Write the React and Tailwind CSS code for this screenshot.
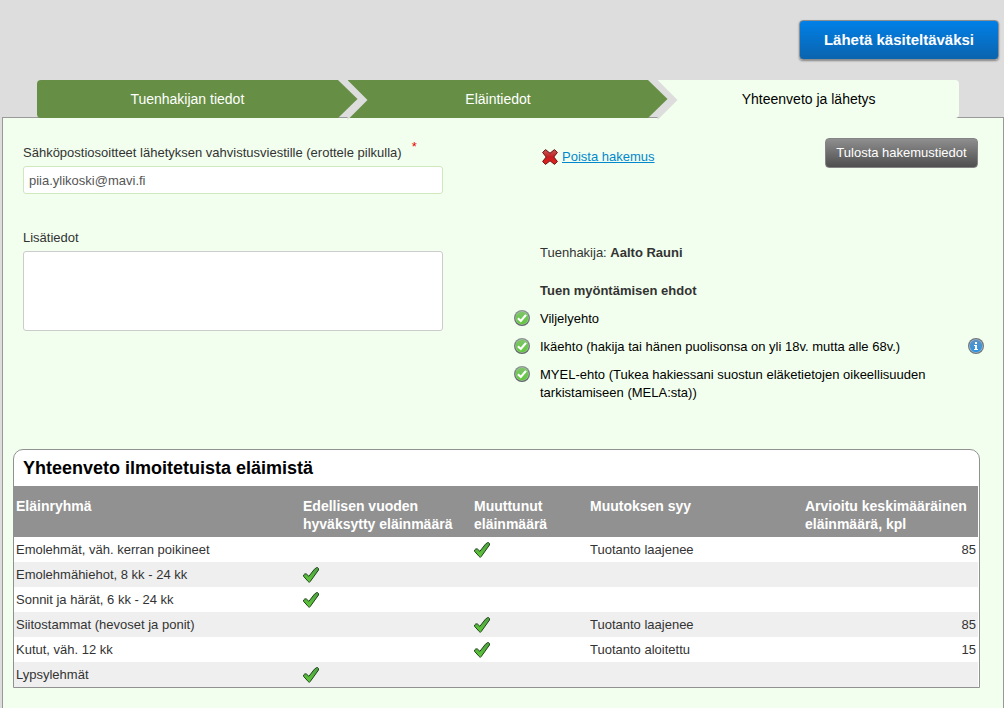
import { useState } from "react";

const steps = [
  { label: "Tuenhakijan tiedot", look: "rounded-l bg-[#668f45] text-white", arrow: true },
  { label: "Eläintiedot", look: "bg-[#668f45] text-white", arrow: true },
  { label: "Yhteenveto ja lähetys", look: "rounded-r bg-[#f2ffee] text-black", arrow: false },
];

const conditions = [
  { text: "Viljelyehto" },
  { text: "Ikäehto (hakija tai hänen puolisonsa on yli 18v. mutta alle 68v.)", info: true },
  { text: "MYEL-ehto (Tukea hakiessani suostun eläketietojen oikeellisuuden tarkistamiseen (MELA:sta))" },
];

const animals = [
  { group: "Emolehmät, väh. kerran poikineet", approved: false, changed: true, reason: "Tuotanto laajenee", amount: 85 },
  { group: "Emolehmähiehot, 8 kk - 24 kk", approved: true },
  { group: "Sonnit ja härät, 6 kk - 24 kk", approved: true },
  { group: "Siitostammat (hevoset ja ponit)", approved: false, changed: true, reason: "Tuotanto laajenee", amount: 85 },
  { group: "Kutut, väh. 12 kk", approved: false, changed: true, reason: "Tuotanto aloitettu", amount: 15 },
  { group: "Lypsylehmät", approved: true },
];

function CheckMark() {
  return (
    <svg className="block" width="16" height="16" viewBox="0 0 16 16" role="img" aria-label="Kyllä">
      <defs>
        <linearGradient id="tick" x1="0" y1="0" x2="0" y2="1">
          <stop offset="0" stopColor="#4f9e45" />
          <stop offset="1" stopColor="#5ecb35" />
        </linearGradient>
      </defs>
      <path d="M13.600 .6H14.600L15.500 1.500V3L7.300 14.400 6.300 15.400 5.300 14.600.6 9.400V8L1.800 6.900H3.300L5.900 9.300 11.400 2.200Z" fill="url(#tick)" stroke="#1f4419" strokeWidth="1" strokeLinejoin="round" />
    </svg>
  );
}

function AcceptIcon() {
  return (
    <svg className="block shrink-0" width="16" height="16" viewBox="0 0 16 16" aria-hidden="true">
      <defs>
        <linearGradient id="accept" x1="0" y1="0" x2="0" y2="1">
          <stop offset="0" stopColor="#7fc46c" />
          <stop offset="1" stopColor="#5fc93a" />
        </linearGradient>
        <linearGradient id="ring" x1="0" y1="0" x2="0" y2="1">
          <stop offset="0" stopColor="#8e9498" />
          <stop offset="1" stopColor="#5c6166" />
        </linearGradient>
      </defs>
      <circle cx="8" cy="8" r="8" fill="url(#ring)" />
      <circle cx="8" cy="8" r="6.7" fill="#a9cf9e" />
      <circle cx="8" cy="8" r="6.200" fill="url(#accept)" />
      <path d="M3.900 8.200 6.800 11 12 4.900" fill="none" stroke="#fff" strokeWidth="2.200" />
    </svg>
  );
}

function InfoIcon() {
  return (
    <svg className="block" width="16" height="16" viewBox="0 0 16 16" aria-hidden="true">
      <defs>
        <linearGradient id="info" x1="0" y1="0" x2="0" y2="1">
          <stop offset="0" stopColor="#5c93c4" />
          <stop offset="1" stopColor="#2c94e0" />
        </linearGradient>
      </defs>
      <circle cx="8" cy="8" r="8" fill="#70767c" />
      <circle cx="8" cy="8" r="6.8" fill="#a9c4da" />
      <circle cx="8" cy="8" r="6.200" fill="url(#info)" />
      <path d="M7 4h2v2H7zM6 7h3v4h1v1H6v-1h1V8H6z" fill="#fff" />
    </svg>
  );
}

function DeleteIcon() {
  return (
    <svg className="block" width="16" height="16" viewBox="0 0 16 16" aria-hidden="true">
      <defs>
        <linearGradient id="cross" x1="0" y1="0" x2="0" y2="1">
          <stop offset="0" stopColor="#c65a5a" />
          <stop offset=".5" stopColor="#c51f1f" />
          <stop offset="1" stopColor="#e82020" />
        </linearGradient>
      </defs>
      <path d="M3.500.6 8 4.200 12.500.6 15.400 3.500 11.800 8 15.400 12.500 12.500 15.400 8 11.800 3.500 15.400.6 12.500 4.200 8 .6 3.500Z" fill="url(#cross)" stroke="#6a1010" strokeWidth="1" strokeLinejoin="round" />
    </svg>
  );
}

function Steps() {
  return (
    <ol className="relative z-10 -mb-px ml-[37px] mr-[45px] flex gap-[10px] text-sm">
      {steps.map((step) => (
        <li key={step.label} className="relative flex-1">
          <a href="#" className={`flex h-[38px] items-center justify-center ${step.look}`}>
            {step.label}
          </a>
          {step.arrow && (
            <svg className="absolute left-full top-0 z-10" width="30" height="40" viewBox="0 0 30 40" aria-hidden="true">
              <path d="M0 0H9.500L29.500 20 9.500 40V37H0Z" fill="#dddddd" />
              <path d="M0 37h9v1H0z" fill="#999999" />
              <path d="M-1 0H0L19.500 19 0 38H-1Z" fill="#668f45" />
            </svg>
          )}
        </li>
      ))}
    </ol>
  );
}

function AnimalTable() {
  return (
    <section className="rounded-t-[10px] border border-[#919191] bg-white pr-px">
      <h2 className="px-[9px] py-1 text-lg font-bold leading-7 text-black">Yhteenveto ilmoitetuista eläimistä</h2>
      <table className="w-full table-fixed">
        <colgroup>
          <col className="w-[287px]" />
          <col className="w-[171px]" />
          <col className="w-[116px]" />
          <col className="w-[215px]" />
          <col />
        </colgroup>
        <thead className="bg-[#919191] text-left text-sm leading-[18px] text-white">
          <tr>
            <th className="px-0.5 pb-1 pt-[11px] align-top">Eläinryhmä</th>
            <th className="px-0.5 pb-1 pt-[11px] align-top">Edellisen vuoden<br />hyväksytty eläinmäärä</th>
            <th className="px-0.5 pb-1 pt-[11px] align-top">Muuttunut<br />eläinmäärä</th>
            <th className="px-0.5 pb-1 pt-[11px] align-top">Muutoksen syy</th>
            <th className="px-0.5 pb-1 pt-[11px] align-top">Arvioitu keskimääräinen<br />eläinmäärä, kpl</th>
          </tr>
        </thead>
        <tbody>
          {animals.map((row) => (
            <tr key={row.group} className="h-[25px] even:bg-[#efefef]">
              <td className="px-0.5">{row.group}</td>
              <td className="px-0.5">{row.approved && <CheckMark />}</td>
              <td className="px-0.5">{row.changed && <CheckMark />}</td>
              <td className="px-0.5">{row.reason}</td>
              <td className="px-0.5 text-right">{row.amount}</td>
            </tr>
          ))}
        </tbody>
      </table>
    </section>
  );
}

export default function App() {
  const [email, setEmail] = useState("piia.ylikoski@mavi.fi");
  const [notes, setNotes] = useState("");

  return (
    <div className="flex min-h-screen flex-col bg-[#dddddd] font-['Liberation_Sans',Arial,sans-serif] text-[13px] leading-[18px] text-[#333333]">
      <header className="flex justify-end pb-5 pr-[5px] pt-5">
        <button type="button" className="h-10 w-[200px] cursor-pointer rounded border border-[#8a8f94] bg-linear-to-b from-[#0080e8] to-[#0a64ae] text-[15px] font-bold text-white shadow-[0_1px_2px_rgba(0,0,0,0.4)]">
          Lähetä käsiteltäväksi
        </button>
      </header>

      <Steps />

      <main className="ml-0.5 grow border border-b-0 border-[#999999] bg-[#f2ffee] px-[10px] pb-5 pt-5">
        <form className="grid grid-cols-[420px_1fr] gap-x-[71px] pl-[10px]" onSubmit={(e) => e.preventDefault()}>
          <div className="pt-[6px]">
            <label htmlFor="email" className="block">
              Sähköpostiosoitteet lähetyksen vahvistusviestille (erottele pilkulla)
              <sup className="ml-[10px] text-[13px] text-[#ee0000]">*</sup>
            </label>
            <input
              id="email"
              type="text"
              value={email}
              onChange={(e) => setEmail(e.target.value)}
              className="mt-1 h-7 w-full rounded-[3px] border border-[#cfe8c0] bg-white px-[5px] text-[#555555]"
            />
            <label htmlFor="notes" className="mt-[35px] block">Lisätiedot</label>
            <textarea
              id="notes"
              value={notes}
              onChange={(e) => setNotes(e.target.value)}
              className="mt-1 block h-20 w-full resize-none rounded-[3px] border border-[#cccccc] bg-white px-[5px] py-1 text-[#555555]"
            />
          </div>

          <div>
            <div className="flex items-center justify-between pl-7 pr-[15px]">
              <a href="#" className="flex items-center gap-1 pt-2 text-[#0088cc] underline">
                <DeleteIcon />
                Poista hakemus
              </a>
              <button type="button" className="h-[30px] w-[153px] cursor-pointer rounded border border-[#858585] bg-linear-to-b from-[#8f8f8f] to-[#4f4f4f] text-white">
                Tulosta hakemustiedot
              </button>
            </div>
            <p className="mt-[76px] pl-[26px]">
              Tuenhakija: <strong>Aalto Rauni</strong>
            </p>
            <h3 className="mt-5 pl-[26px] font-bold">Tuen myöntämisen ehdot</h3>
            <ul className="mt-[10px] space-y-[10px] pr-[9px] text-black">
              {conditions.map((item) => (
                <li key={item.text} className="flex items-start gap-[10px]">
                  <AcceptIcon />
                  <span className="max-w-[400px] grow">{item.text}</span>
                  {item.info && (
                    <button type="button" aria-label="Lisätietoja" className="ml-auto cursor-pointer">
                      <InfoIcon />
                    </button>
                  )}
                </li>
              ))}
            </ul>
          </div>
        </form>

        <div className="mr-[13px] mt-[47px]">
          <AnimalTable />
        </div>
      </main>
    </div>
  );
}
